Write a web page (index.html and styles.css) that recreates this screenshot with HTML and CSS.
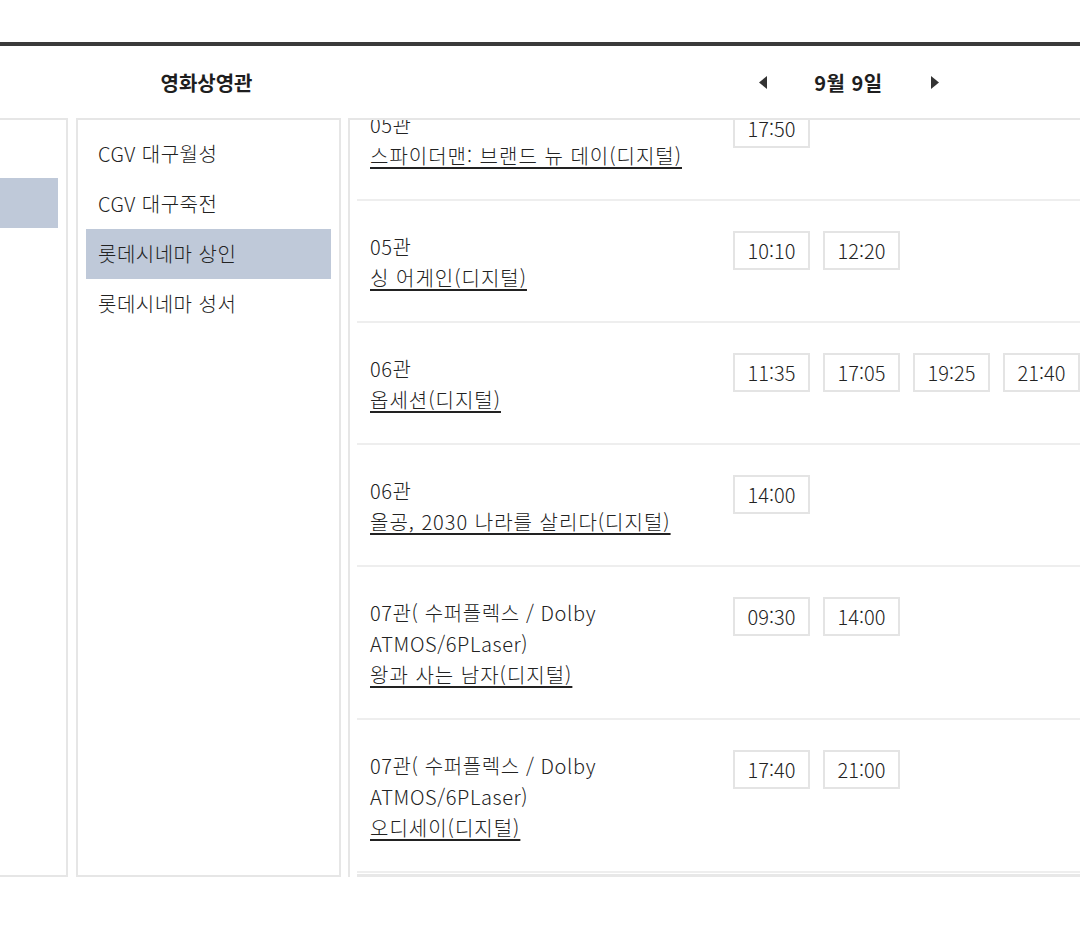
FILE: index.html
```html
<!DOCTYPE html>
<html lang="ko">
<head>
<meta charset="utf-8">
<title>상영시간표</title>
<link rel="stylesheet" href="styles.css">
</head>
<body>
<div class="page">
  <div class="cols">
    <section class="col col-region">
      <div class="col-head"></div>
      <div class="box box-region">
        <ul class="list">
          <li class="item"></li>
          <li class="item is-active"></li>
        </ul>
      </div>
    </section>
    <section class="col col-theater">
      <div class="col-head"><h2 class="head-title">영화상영관</h2></div>
      <div class="box box-theater">
        <ul class="list">
          <li class="item">CGV 대구월성</li>
          <li class="item">CGV 대구죽전</li>
          <li class="item is-active">롯데시네마 상인</li>
          <li class="item">롯데시네마 성서</li>
        </ul>
      </div>
    </section>
    <section class="col col-times">
      <div class="col-head">
        <div class="date-nav">
          <svg class="arrow" width="8" height="13" viewBox="0 0 8 13"><path d="M8 0 L0 6.5 L8 13 Z" fill="#333"/></svg>
          <span class="date">9월 9일</span>
          <svg class="arrow" width="8" height="13" viewBox="0 0 8 13"><path d="M0 0 L8 6.5 L0 13 Z" fill="#333"/></svg>
        </div>
      </div>
      <div class="box box-times">
        <div class="scroll">
          <ul class="rows">
            <li class="row">
              <div class="info"><p class="hall">05관</p><a class="movie" href="#">스파이더맨: 브랜드 뉴 데이(디지털)</a></div>
              <div class="times"><span class="time">17:50</span></div>
            </li>
            <li class="row">
              <div class="info"><p class="hall">05관</p><a class="movie" href="#">싱 어게인(디지털)</a></div>
              <div class="times"><span class="time">10:10</span><span class="time">12:20</span></div>
            </li>
            <li class="row">
              <div class="info"><p class="hall">06관</p><a class="movie" href="#">옵세션(디지털)</a></div>
              <div class="times"><span class="time">11:35</span><span class="time">17:05</span><span class="time">19:25</span><span class="time">21:40</span></div>
            </li>
            <li class="row">
              <div class="info"><p class="hall">06관</p><a class="movie" href="#">올공, 2030 나라를 살리다(디지털)</a></div>
              <div class="times"><span class="time">14:00</span></div>
            </li>
            <li class="row">
              <div class="info"><p class="hall">07관( 수퍼플렉스 / Dolby ATMOS/6PLaser)</p><a class="movie" href="#">왕과 사는 남자(디지털)</a></div>
              <div class="times"><span class="time">09:30</span><span class="time">14:00</span></div>
            </li>
            <li class="row">
              <div class="info"><p class="hall">07관( 수퍼플렉스 / Dolby ATMOS/6PLaser)</p><a class="movie" href="#">오디세이(디지털)</a></div>
              <div class="times"><span class="time">17:40</span><span class="time">21:00</span></div>
            </li>
          </ul>
        </div>
      </div>
    </section>
  </div>
</div>
</body>
</html>
```

FILE: styles.css
```css
html, body {
  margin: 0;
  padding: 0;
  background: #fff;
}
body {
  font-family: "Noto Sans CJK KR", "Noto Sans", sans-serif;
  font-weight: 300;
  color: #222;
  overflow: hidden;
  width: 1080px;
  height: 934px;
}
ul, p, h2 {
  margin: 0;
  padding: 0;
  list-style: none;
}
.page {
  padding-top: 42px;
}
.cols {
  display: flex;
  margin-left: -125px;
}
.col {
  flex: none;
}
.col-region { width: 200px; }
.col-theater { width: 273px; }
.col-times { width: 996px; }

.col-head {
  box-sizing: border-box;
  height: 76px;
  border-top: 4px solid #3a3a3a;
  display: flex;
  align-items: center;
  justify-content: center;
}
.head-title {
  font-size: 20px;
  font-weight: 700;
  color: #1e1e1e;
  margin-left: -10px;
}
.date-nav {
  display: flex;
  align-items: center;
  margin-left: 6px;
}
.date {
  font-size: 20px;
  font-weight: 700;
  color: #1e1e1e;
  margin: 0 48px 0 47px;
  letter-spacing: 0.5px;
}
.arrow { display: block; }

.box {
  height: 759px;
  box-sizing: border-box;
  border: 2px solid #e6e6e6;
}
.box-region {
  margin-right: 7px;
  padding: 8px 8px 0 0;
}
.box-theater {
  margin: 0 7px 0 1px;
  padding: 9px 8px 0 8px;
}
.box-times {
  border-right: none;
  border-bottom: none;
  padding: 0 0 0 7px;
}
.item {
  height: 50px;
  line-height: 50px;
  font-size: 20px;
  padding-left: 12px;
  color: #222;
  white-space: nowrap;
  letter-spacing: 0.5px;
}
.item.is-active {
  background: #bfc9d9;
}

.scroll {
  height: 757px;
  overflow: hidden;
  box-sizing: border-box;
  border-bottom: 3px solid #e8e8e8;
}
.rows {
  margin-top: -41px;
}
.row {
  display: flex;
  align-items: flex-start;
  padding: 30px 0 28px 13px;
  border-bottom: 2px solid #eeeeee;
}
.info {
  width: 350px;
  margin-right: 13px;
  flex: none;
  font-size: 20px;
  line-height: 31px;
  letter-spacing: 0.6px;
}
.hall {
  color: #222;
}
.movie {
  color: #222;
  text-decoration: underline;
  text-underline-offset: 3px;
  letter-spacing: 1px;
}
.times {
  display: flex;
  gap: 13px;
}
.time {
  display: block;
  width: 77px;
  height: 39px;
  box-sizing: border-box;
  border: 2px solid #e4e4e4;
  text-align: center;
  line-height: 35px;
  font-size: 20px;
  color: #222;
}
```
